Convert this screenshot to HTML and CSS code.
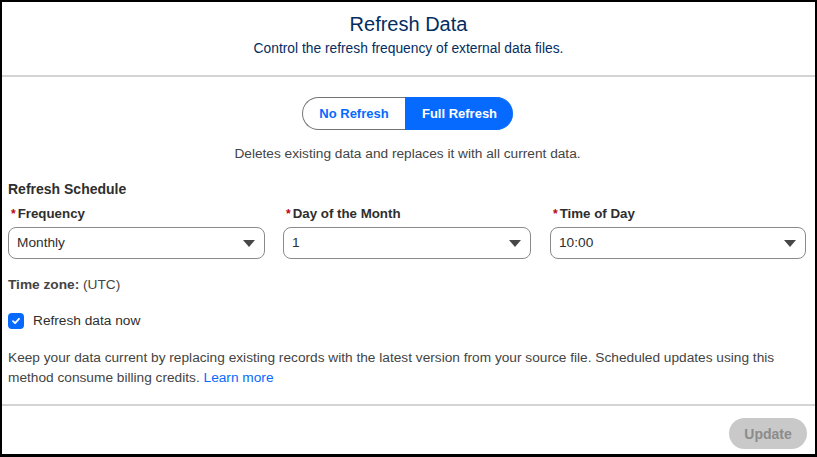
FILE: index.html
```html
<!DOCTYPE html>
<html lang="en">
<head>
  <meta charset="UTF-8" />
  <meta name="viewport" content="width=device-width, initial-scale=1.0"/>
  <title>Refresh Data</title>
  <link rel="stylesheet" href="styles.css">
</head>
<body>
  <div class="modal">
    <header class="modal-header">
      <h1 class="title">Refresh Data</h1>
      <p class="subtitle">Control the refresh frequency of external data files.</p>
    </header>

    <main class="modal-body">
      <div class="toggle">
        <button class="toggle-btn">No Refresh</button>
        <button class="toggle-btn active">Full Refresh</button>
      </div>
      <p class="toggle-help">Deletes existing data and replaces it with all current data.</p>

      <h2 class="section-title">Refresh Schedule</h2>
      <div class="fields">
        <div class="field">
          <label class="label"><abbr class="req">*</abbr>Frequency</label>
          <div class="select">Monthly<span class="caret"></span></div>
        </div>
        <div class="field">
          <label class="label"><abbr class="req">*</abbr>Day of the Month</label>
          <div class="select">1<span class="caret"></span></div>
        </div>
        <div class="field">
          <label class="label"><abbr class="req">*</abbr>Time of Day</label>
          <div class="select">10:00<span class="caret"></span></div>
        </div>
      </div>

      <p class="timezone"><strong>Time zone:</strong> (UTC)</p>

      <label class="check">
        <span class="box">
          <svg width="10" height="10" viewBox="0 0 10 10"><path d="M2 5.2 L4.1 7.2 L8 2.8" fill="none" stroke="#fff" stroke-width="1.8" stroke-linecap="round" stroke-linejoin="round"/></svg>
        </span>
        Refresh data now
      </label>

      <p class="note">Keep your data current by replacing existing records with the latest version from your source file. Scheduled updates using this method consume billing credits. <a href="#" class="link">Learn more</a></p>
    </main>

    <footer class="modal-footer">
      <button class="btn-update" disabled>Update</button>
    </footer>
  </div>
</body>
</html>
```

FILE: styles.css
```css
:root {
  --navy: #032d60;
  --text: #2e2e2e;
  --muted: #444444;
  --blue: #066afe;
  --line: #d4d4d4;
  --field-border: #8a8a8a;
}

* {
  box-sizing: border-box;
}

body {
  margin: 0;
  font-family: "Liberation Sans", Arial, sans-serif;
  color: var(--text);
  background: #fff;
}

.modal {
  width: 817px;
  height: 457px;
  border: 2px solid #000;
  border-bottom-width: 3px;
  display: flex;
  flex-direction: column;
}

.modal-header {
  text-align: center;
  padding-top: 10px;
  height: 75px;
  border-bottom: 2px solid var(--line);
}

.title {
  margin: 0;
  font-size: 20px;
  font-weight: 400;
  line-height: 24px;
  color: var(--navy);
}

.subtitle {
  margin: 3px 0 0;
  font-size: 13.8px;
  line-height: 20px;
  color: var(--navy);
}

.modal-body {
  padding: 20px 8px 0 6px;
  height: 329px;
  border-bottom: 2px solid var(--line);
}

.toggle {
  display: flex;
  justify-content: center;
}

.toggle-btn {
  font-family: inherit;
  font-size: 13px;
  font-weight: 700;
  height: 33px;
  border: 1px solid #747474;
  background: #fff;
  color: var(--blue);
  padding: 0;
  width: 103px;
  border-radius: 17px 0 0 17px;
  border-right: none;
}

.toggle-btn.active {
  width: 108px;
  background: var(--blue);
  border-color: var(--blue);
  color: #fff;
  border-radius: 0 17px 17px 0;
}

.toggle-help {
  text-align: center;
  margin: 15px 0 0;
  font-size: 13.7px;
  line-height: 18px;
  color: var(--muted);
}

.section-title {
  margin: 17px 0 0;
  font-size: 14px;
  font-weight: 700;
  line-height: 18px;
  color: var(--text);
}

.fields {
  display: grid;
  grid-template-columns: 257px 248px 257px;
  column-gap: 18px;
  margin-top: 7px;
}

.field:last-child {
  margin-left: 1px;
}

.label {
  display: block;
  font-size: 13.3px;
  font-weight: 700;
  line-height: 18px;
  color: var(--text);
  padding-left: 3px;
}

.req {
  color: #ba0517;
  text-decoration: none;
  margin-right: 2px;
  font-size: 12px;
}

.select {
  position: relative;
  margin-top: 4px;
  height: 32px;
  border: 1px solid var(--field-border);
  border-radius: 8px;
  padding: 0 0 0 8px;
  font-size: 13.7px;
  line-height: 30px;
  color: var(--text);
}

.caret {
  position: absolute;
  right: 9px;
  top: 12px;
  width: 0;
  height: 0;
  border-left: 6px solid transparent;
  border-right: 6px solid transparent;
  border-top: 7px solid #474747;
}

.timezone {
  margin: 17px 0 0;
  font-size: 13.7px;
  line-height: 18px;
  color: var(--muted);
}

.timezone strong {
  color: var(--muted);
}

.check {
  display: flex;
  align-items: center;
  gap: 9px;
  margin: 18px 0 0;
  font-size: 13.7px;
  line-height: 18px;
  color: var(--text);
}

.box {
  width: 16px;
  height: 16px;
  border-radius: 4px;
  background: var(--blue);
  display: flex;
  align-items: center;
  justify-content: center;
}

.note {
  margin: 18px 0 0;
  font-size: 13.7px;
  line-height: 20px;
  color: var(--muted);
}

.link {
  color: var(--blue);
  text-decoration: none;
}

.modal-footer {
  display: flex;
  justify-content: flex-end;
  padding: 12px 8px 0 0;
}

.btn-update {
  font-family: inherit;
  font-size: 14px;
  font-weight: 700;
  width: 78px;
  height: 31px;
  border: none;
  border-radius: 16px;
  background: #c9c9c9;
  color: #8c8c8c;
}
```
